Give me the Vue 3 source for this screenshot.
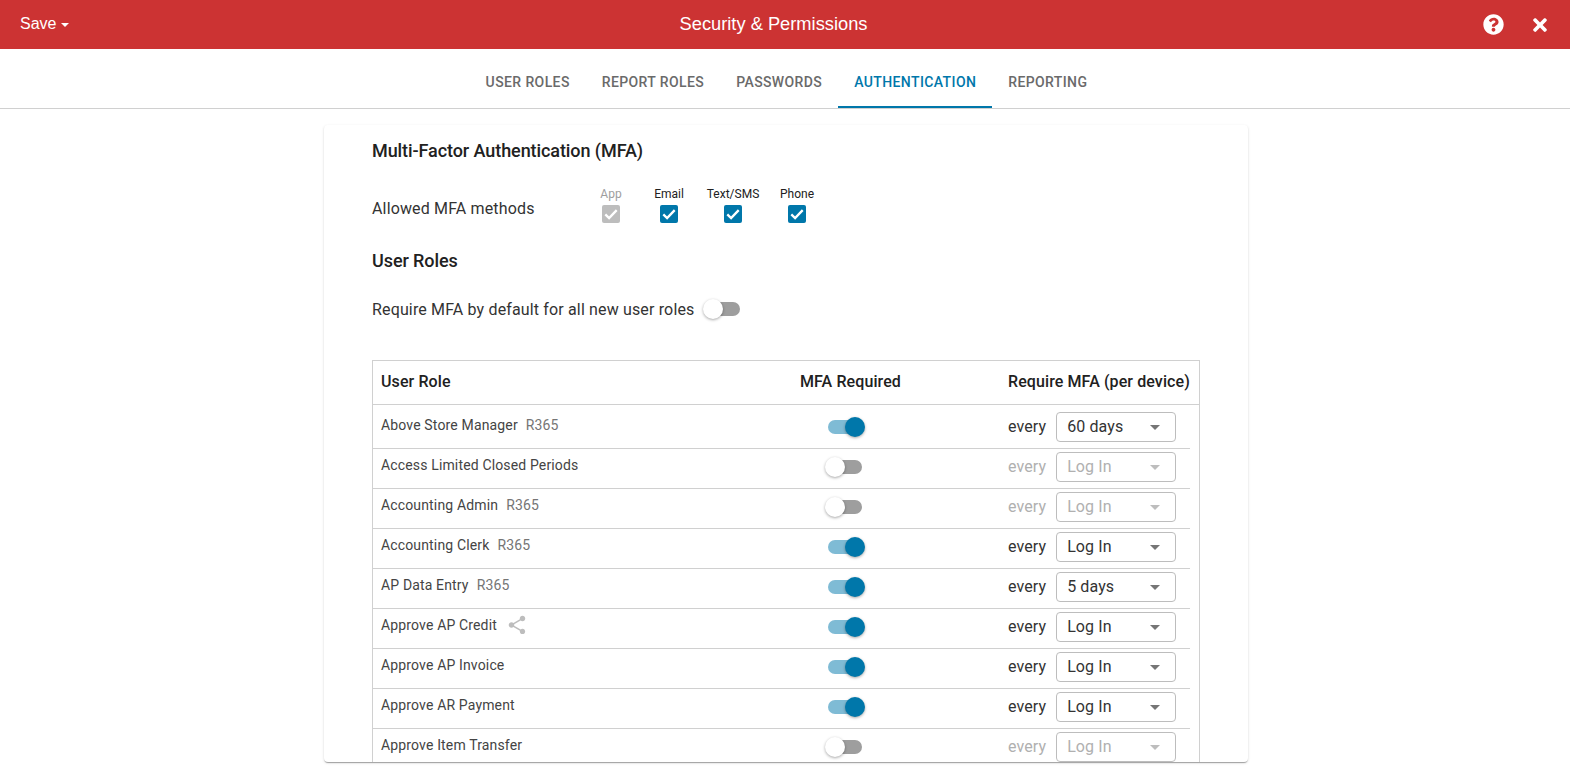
<script setup>
const tabs = ['User Roles', 'Report Roles', 'Passwords', 'Authentication', 'Reporting']
const methods = [
  { label: 'App', disabled: true },
  { label: 'Email' },
  { label: 'Text/SMS' },
  { label: 'Phone' }
]
const roles = [
  { name: 'Above Store Manager', tag: 'R365', on: true, period: '60 days' },
  { name: 'Access Limited Closed Periods', on: false, period: 'Log In' },
  { name: 'Accounting Admin', tag: 'R365', on: false, period: 'Log In' },
  { name: 'Accounting Clerk', tag: 'R365', on: true, period: 'Log In' },
  { name: 'AP Data Entry', tag: 'R365', on: true, period: '5 days' },
  { name: 'Approve AP Credit', share: true, on: true, period: 'Log In' },
  { name: 'Approve AP Invoice', on: true, period: 'Log In' },
  { name: 'Approve AR Payment', on: true, period: 'Log In' },
  { name: 'Approve Item Transfer', on: false, period: 'Log In' }
]
</script>

<template>
  <div class="page">
    <header class="topbar">
      <div class="save">Save<span class="save-caret"></span></div>
      <div class="title">Security &amp; Permissions</div>
      <div class="top-icons">
        <svg class="help" viewBox="0 0 512 512" fill="#fff"><path d="M504 256c0 136.997-111.043 248-248 248S8 392.997 8 256C8 119.083 119.043 8 256 8s248 111.083 248 248zM262.655 90c-54.497 0-89.255 22.957-116.549 63.758-3.536 5.286-2.353 12.415 2.715 16.258l34.699 26.31c5.205 3.947 12.621 3.008 16.665-2.122 17.864-22.658 30.113-35.797 57.303-35.797 20.429 0 45.698 13.148 45.698 32.958 0 14.976-12.363 22.667-32.534 33.976C247.128 238.528 216 254.941 216 296v4c0 6.627 5.373 12 12 12h56c6.627 0 12-5.373 12-12v-1.333c0-28.462 83.186-29.647 83.186-106.667 0-58.002-60.165-102-116.531-102zM256 338c-25.365 0-46 20.635-46 46 0 25.364 20.635 46 46 46s46-20.636 46-46c0-25.365-20.635-46-46-46z"/></svg>
        <svg class="close" viewBox="0 0 352 512" fill="#fff"><path d="M242.72 256l100.07-100.07c12.28-12.28 12.28-32.19 0-44.48l-22.24-22.24c-12.28-12.28-32.19-12.28-44.48 0L176 189.28 75.93 89.21c-12.28-12.28-32.19-12.28-44.48 0L9.21 111.45c-12.28 12.28-12.28 32.19 0 44.48L109.28 256 9.21 356.07c-12.28 12.28-12.28 32.19 0 44.48l22.24 22.24c12.28 12.28 32.2 12.28 44.48 0L176 322.72l100.07 100.07c12.28 12.28 32.2 12.28 44.48 0l22.24-22.24c12.28-12.28 12.28-32.19 0-44.48L242.72 256z"/></svg>
      </div>
    </header>

    <nav class="tabs">
      <div v-for="t in tabs" :key="t" class="tab" :class="{ active: t === 'Authentication' }">{{ t }}</div>
    </nav>

    <main class="card">
      <h2 class="heading first">Multi-Factor Authentication (MFA)</h2>
      <div class="methods-row">
        <div class="methods-label">Allowed MFA methods</div>
        <div class="methods">
          <div v-for="m in methods" :key="m.label" class="method" :class="{ disabled: m.disabled }">
            <div class="method-label">{{ m.label }}</div>
            <div class="checkbox">
              <svg viewBox="0 0 18 18" width="18" height="18"><path d="M3.3 9.4l3.8 3.7 7.6-8" fill="none" stroke="#fff" stroke-width="2.3"/></svg>
            </div>
          </div>
        </div>
      </div>

      <h2 class="heading second">User Roles</h2>
      <div class="default-row">
        <span>Require MFA by default for all new user roles</span>
        <div class="toggle"><span class="track"></span><span class="thumb"></span></div>
      </div>

      <section class="table">
        <div class="thead">
          <div class="col-name">User Role</div>
          <div class="col-req">MFA Required</div>
          <div class="col-per">Require MFA (per device)</div>
        </div>
        <div v-for="r in roles" :key="r.name" class="row">
          <div class="cell-name">
            <span>{{ r.name }}</span>
            <span v-if="r.tag" class="tag">{{ r.tag }}</span>
            <svg v-if="r.share" class="share" viewBox="0 0 24 24" fill="#bdbdbd"><path d="M18 16.08c-.76 0-1.44.3-1.96.77L8.91 12.7c.05-.23.09-.46.09-.7s-.04-.47-.09-.7l7.05-4.11c.54.5 1.25.81 2.04.81 1.66 0 3-1.34 3-3s-1.34-3-3-3-3 1.34-3 3c0 .24.04.47.09.7L8.04 9.81C7.5 9.31 6.79 9 6 9c-1.66 0-3 1.34-3 3s1.34 3 3 3c.79 0 1.5-.31 2.04-.81l7.12 4.16c-.05.21-.08.43-.08.65 0 1.61 1.31 2.92 2.92 2.92 1.61 0 2.92-1.31 2.92-2.92s-1.31-2.92-2.92-2.92z"/></svg>
          </div>
          <div class="cell-toggle">
            <div class="toggle" :class="{ on: r.on }"><span class="track"></span><span class="thumb"></span></div>
          </div>
          <div class="cell-per" :class="{ off: !r.on }">
            <span class="every">every</span>
            <div class="select">
              <span>{{ r.period }}</span>
              <span class="select-caret"></span>
            </div>
          </div>
        </div>
      </section>
    </main>
  </div>
</template>

<style>
html, body { margin: 0; background: #fff; overflow: hidden; }
</style>

<style scoped>
.page {
  height: 774px;
  display: flex;
  flex-direction: column;
  overflow: hidden;
  background: #fff;
  font-family: Roboto, sans-serif;
  color: #212121;
}
.topbar {
  height: 49px;
  flex: none;
  box-sizing: border-box;
  background: #cc3333;
  color: #fff;
  display: flex;
  align-items: center;
  justify-content: space-between;
  padding: 0 23px 0 20px;
  position: relative;
  font-family: "Liberation Sans", Arial, sans-serif;
}
.save { font-size: 16px; display: flex; align-items: center; padding-bottom: 2px; }
.save-caret {
  margin-left: 5px;
  margin-top: 3px;
  border-left: 4px solid transparent;
  border-right: 4px solid transparent;
  border-top: 4px solid #fff;
}
.title {
  position: absolute;
  left: 0;
  right: 23px;
  top: 14px;
  text-align: center;
  font-size: 18.3px;
  line-height: 20px;
}
.top-icons { display: flex; align-items: center; gap: 29px; }
.help { width: 21px; height: 21px; display: block; }
.close { width: 14px; height: 20px; display: block; }

.tabs {
  height: 60px;
  flex: none;
  box-sizing: border-box;
  border-bottom: 1px solid #d0d0d0;
  display: flex;
  justify-content: center;
  padding-left: 3px;
}
.tab {
  padding: 9px 16px 0;
  height: 59px;
  box-sizing: border-box;
  display: flex;
  align-items: center;
  text-transform: uppercase;
  font-size: 14px;
  font-weight: 500;
  letter-spacing: 0.39px;
  color: #6a6a6a;
  border-bottom: 2px solid transparent;
}
.tab.active { color: #0077aa; border-bottom-color: #0077aa; }

.card {
  width: 924px;
  height: 637px;
  flex: none;
  box-sizing: border-box;
  margin: 16px 0 0 324px;
  padding: 0 48px;
  overflow: hidden;
  background: #fff;
  border-radius: 4px;
  box-shadow: 0 2px 1px -1px rgba(0, 0, 0, 0.2), 0 1px 1px 0 rgba(0, 0, 0, 0.14), 0 1px 3px 0 rgba(0, 0, 0, 0.12);
}
.heading {
  margin: 0;
  font-size: 18px;
  font-weight: 500;
  line-height: 24px;
  letter-spacing: -0.08px;
  color: #212121;
}
.heading.first { margin-top: 14px; }
.methods-row {
  margin-top: 22px;
  display: flex;
  align-items: center;
  height: 38px;
}
.methods-label {
  width: 218px;
  font-size: 16px;
  letter-spacing: 0.15px;
  color: #333;
  padding-top: 8px;
}
.methods {
  display: grid;
  grid-template-columns: 42px 74px 54px 74px;
}
.method {
  display: flex;
  flex-direction: column;
  align-items: center;
  color: #212121;
}
.method-label { font-size: 12px; line-height: 14px; margin: 1px 0 4px; white-space: nowrap; }
.checkbox { width: 18px; height: 18px; border-radius: 2px; background: #0077aa; }
.method.disabled .method-label { color: #9e9e9e; }
.method.disabled .checkbox { background: #bdbdbd; }
.heading.second { margin-top: 26px; }
.default-row {
  margin-top: 24px;
  display: flex;
  align-items: center;
  height: 24px;
  gap: 9px;
  font-size: 16px;
  letter-spacing: 0.15px;
  color: #333;
}
.toggle { position: relative; width: 40px; height: 20px; flex: none; }
.track {
  position: absolute;
  left: 3px;
  top: 3px;
  width: 34px;
  height: 14px;
  border-radius: 7px;
  background: #9e9e9e;
}
.thumb {
  position: absolute;
  left: 0;
  top: 0;
  width: 20px;
  height: 20px;
  border-radius: 50%;
  background: #fff;
  box-shadow: 0 1px 3px rgba(0, 0, 0, 0.35);
}
.toggle.on .track { background: #7fbbd5; }
.toggle.on .thumb { left: 20px; background: #0077aa; }

.table {
  margin-top: 39px;
  width: 828px;
  box-sizing: border-box;
  border: 1px solid #d0d0d0;
  border-bottom: 0;
}
.thead {
  height: 44px;
  box-sizing: border-box;
  border-bottom: 1px solid #d0d0d0;
  display: flex;
  align-items: center;
  padding: 0 0 2px 8px;
  font-size: 16px;
  font-weight: 500;
  letter-spacing: 0.1px;
  color: #212121;
}
.col-name { width: 419px; }
.col-req { width: 100px; white-space: nowrap; text-align: center; }
.col-per { margin-left: 108px; white-space: nowrap; }
.row {
  height: 40px;
  box-sizing: border-box;
  margin-right: 9px;
  border-bottom: 1px solid #d0d0d0;
  display: flex;
  align-items: flex-start;
  padding: 3px 0 0 8px;
}
.thead + .row { height: 44px; padding-top: 7px; }
.cell-name {
  width: 444px;
  height: 30px;
  flex: none;
  display: flex;
  align-items: center;
  font-size: 14px;
  letter-spacing: 0.15px;
  color: #444;
  margin-top: -2px;
}
.tag { margin-left: 8px; color: #757575; }
.share { width: 22px; height: 22px; margin-left: 9px; }
.cell-toggle { width: 183px; flex: none; display: flex; padding-top: 5px; }
.cell-per {
  display: flex;
  align-items: center;
  gap: 10px;
  font-size: 16px;
  letter-spacing: 0.1px;
  color: #333;
}
.every { padding-bottom: 2px; }
.select {
  width: 120px;
  height: 30px;
  box-sizing: border-box;
  border: 1px solid #bdbdbd;
  border-radius: 4px;
  padding: 0 15px 2px 10px;
  display: flex;
  align-items: center;
  justify-content: space-between;
}
.select-caret {
  border-left: 5px solid transparent;
  border-right: 5px solid transparent;
  border-top: 5px solid #757575;
  margin-top: 2px;
}
.cell-per.off { color: #b0b0b0; }
.cell-per.off .select-caret { border-top-color: #bdbdbd; }
</style>
